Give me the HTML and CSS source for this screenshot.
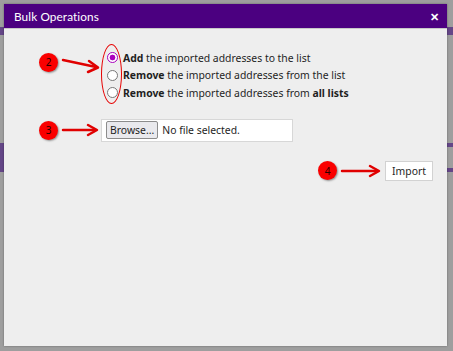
FILE: index.html
```html
<!DOCTYPE html>
<html>
  <head>
    <meta charset="utf-8" />
    <title>Bulk Operations</title>
    <link rel="stylesheet" href="styles.css">
  </head>
  <body>
    <!-- page behind the modal -->
    <div class="backdrop">
      <div class="bg-line bg-top"></div>
      <div class="bg-line bg-mid"></div>
      <div class="bg-line bg-low"></div>
      <div class="bg-side"></div>
    </div>

    <div class="dialog">
      <div class="titlebar">
        <span class="title">Bulk Operations</span>
        <span class="close">&#x2715;</span>
      </div>

      <div class="dialog-body">
        <!-- 2. radios -->
        <div class="row row-radios">
          <div class="marker">
            <span class="dot">2</span>
            <svg class="arrow" width="40" height="20" viewBox="0 0 40 20">
              <path d="M2 4 L35 11" stroke="#e00000" stroke-width="2.5" fill="none" stroke-linecap="round" />
              <path d="M28 5 L37 11.5 L27 16" stroke="#e00000" stroke-width="2.5" fill="none" stroke-linecap="round" stroke-linejoin="round" />
            </svg>
          </div>
          <div class="radios">
            <span class="ring"></span>
            <label class="opt"><input type="radio" name="op" checked /><span><b>Add</b> the imported addresses to the list</span></label>
            <label class="opt"><input type="radio" name="op" /><span><b>Remove</b> the imported addresses from the list</span></label>
            <label class="opt"><input type="radio" name="op" /><span><b>Remove</b> the imported addresses from <b>all lists</b></span></label>
          </div>
        </div>

        <!-- 3. file -->
        <div class="row row-file">
          <div class="marker">
            <span class="dot">3</span>
            <svg class="arrow" width="40" height="14" viewBox="0 0 40 14">
              <path d="M2 7 L34 7" stroke="#e00000" stroke-width="2.5" fill="none" stroke-linecap="round" />
              <path d="M27 2 L36 7 L27 12" stroke="#e00000" stroke-width="2.5" fill="none" stroke-linecap="round" stroke-linejoin="round" />
            </svg>
          </div>
          <div class="filebox">
            <span class="browse">Browse...</span>
            <span class="nofile">No file selected.</span>
          </div>
        </div>

        <!-- 4. import -->
        <div class="row row-import">
          <div class="marker">
            <span class="dot">4</span>
            <svg class="arrow" width="44" height="14" viewBox="0 0 44 14">
              <path d="M2 7 L37 7" stroke="#e00000" stroke-width="2.5" fill="none" stroke-linecap="round" />
              <path d="M30 2 L39 7 L30 12" stroke="#e00000" stroke-width="2.5" fill="none" stroke-linecap="round" stroke-linejoin="round" />
            </svg>
          </div>
          <button class="import">Import</button>
        </div>
      </div>
    </div>
  </body>
</html>
```

FILE: styles.css
```css
body {
  margin: 0;
  padding: 0;
  width: 453px;
  height: 351px;
  overflow: hidden;
  position: relative;
  background-color: rgb(158, 158, 158);
  font-family: "Noto Sans", "Open Sans", sans-serif;
}

/* page behind */
.backdrop {
  position: absolute;
  inset: 0;
}
.bg-line {
  position: absolute;
  left: 0;
  right: 0;
  background-color: rgb(100, 70, 135);
}
.bg-top {
  top: 27px;
  height: 8px;
}
.bg-mid {
  top: 143px;
  height: 4px;
}
.bg-low {
  top: 168px;
  height: 4px;
}
.bg-side {
  position: absolute;
  left: 0;
  top: 143px;
  width: 4px;
  height: 27px;
  background-color: rgb(100, 70, 135);
}

/* modal */
.dialog {
  position: absolute;
  left: 4px;
  top: 4px;
  width: 443px;
  height: 342px;
  background-color: rgb(238, 238, 238);
  box-shadow: 0 0 2px rgba(0, 0, 0, 0.35);
  display: flex;
  flex-direction: column;
}
.titlebar {
  height: 24px;
  background-color: rgb(75, 0, 128);
  color: #fff;
  display: flex;
  align-items: center;
  justify-content: space-between;
  padding: 0 8px 0 10px;
  border-bottom: 1px solid rgb(200, 200, 200);
}
.title {
  font-family: "Lato", "Noto Sans", sans-serif;
  font-size: 11.8px;
  letter-spacing: 0.1px;
}
.close {
  font-size: 11px;
  font-weight: bold;
}

.dialog-body {
  padding: 20px 14px 0 35px;
  display: flex;
  flex-direction: column;
  font-size: 10.4px;
  color: rgb(30, 30, 30);
}
.row {
  display: flex;
}

/* annotation markers */
.marker {
  display: flex;
  align-items: center;
  width: 62px;
  flex-shrink: 0;
}
.dot {
  width: 19px;
  height: 19px;
  border-radius: 50%;
  background-color: rgb(250, 0, 0);
  box-shadow: 1px 1px 2px rgba(0, 0, 0, 0.4);
  color: rgb(40, 0, 0);
  font-size: 10px;
  display: flex;
  justify-content: center;
  align-items: center;
  flex-shrink: 0;
}
.arrow {
  margin-left: 3px;
}

/* 2. radios */
.row-radios {
  align-items: flex-start;
}
.row-radios .marker {
  margin-top: -1px;
}
.row-radios .arrow {
  margin-top: 8px;
}
.radios {
  position: relative;
  display: flex;
  flex-direction: column;
  padding: 0 0 0 6px;
}
.ring {
  position: absolute;
  left: 0;
  top: -5px;
  width: 19px;
  height: 58px;
  border: 1.5px solid rgb(230, 0, 0);
  border-radius: 50%;
}
.opt {
  display: flex;
  align-items: center;
  height: 17.5px;
}
.opt input {
  appearance: none;
  width: 11px;
  height: 11px;
  margin: 0 5px 0 0;
  border: 1px solid rgb(120, 120, 120);
  border-radius: 50%;
  background-color: #fff;
}
.opt input:checked {
  border-color: rgb(170, 0, 190);
  background: radial-gradient(circle, rgb(170, 0, 190) 0 2.6px, #fff 3.2px);
}

/* 3. file */
.row-file {
  margin-top: 17px;
  align-items: center;
}
.filebox {
  box-sizing: border-box;
  width: 192px;
  height: 23px;
  background-color: #fff;
  border: 1px solid rgb(215, 215, 215);
  display: flex;
  align-items: center;
  padding-left: 4px;
}
.browse {
  height: 16px;
  padding: 0 3px;
  border: 1px solid rgb(140, 140, 140);
  border-radius: 2px;
  background-color: rgb(233, 233, 237);
  display: flex;
  align-items: center;
}
.nofile {
  margin-left: 4px;
}

/* 4. import */
.row-import {
  margin-top: 19px;
  justify-content: flex-end;
  align-items: center;
}
.row-import .marker {
  width: 67px;
}
.import {
  width: 48px;
  height: 20px;
  padding: 0;
  font-family: "Noto Sans", sans-serif;
  font-size: 10.4px;
  color: rgb(30, 30, 30);
  background-color: #fff;
  border: 1px solid rgb(210, 210, 210);
}
```
